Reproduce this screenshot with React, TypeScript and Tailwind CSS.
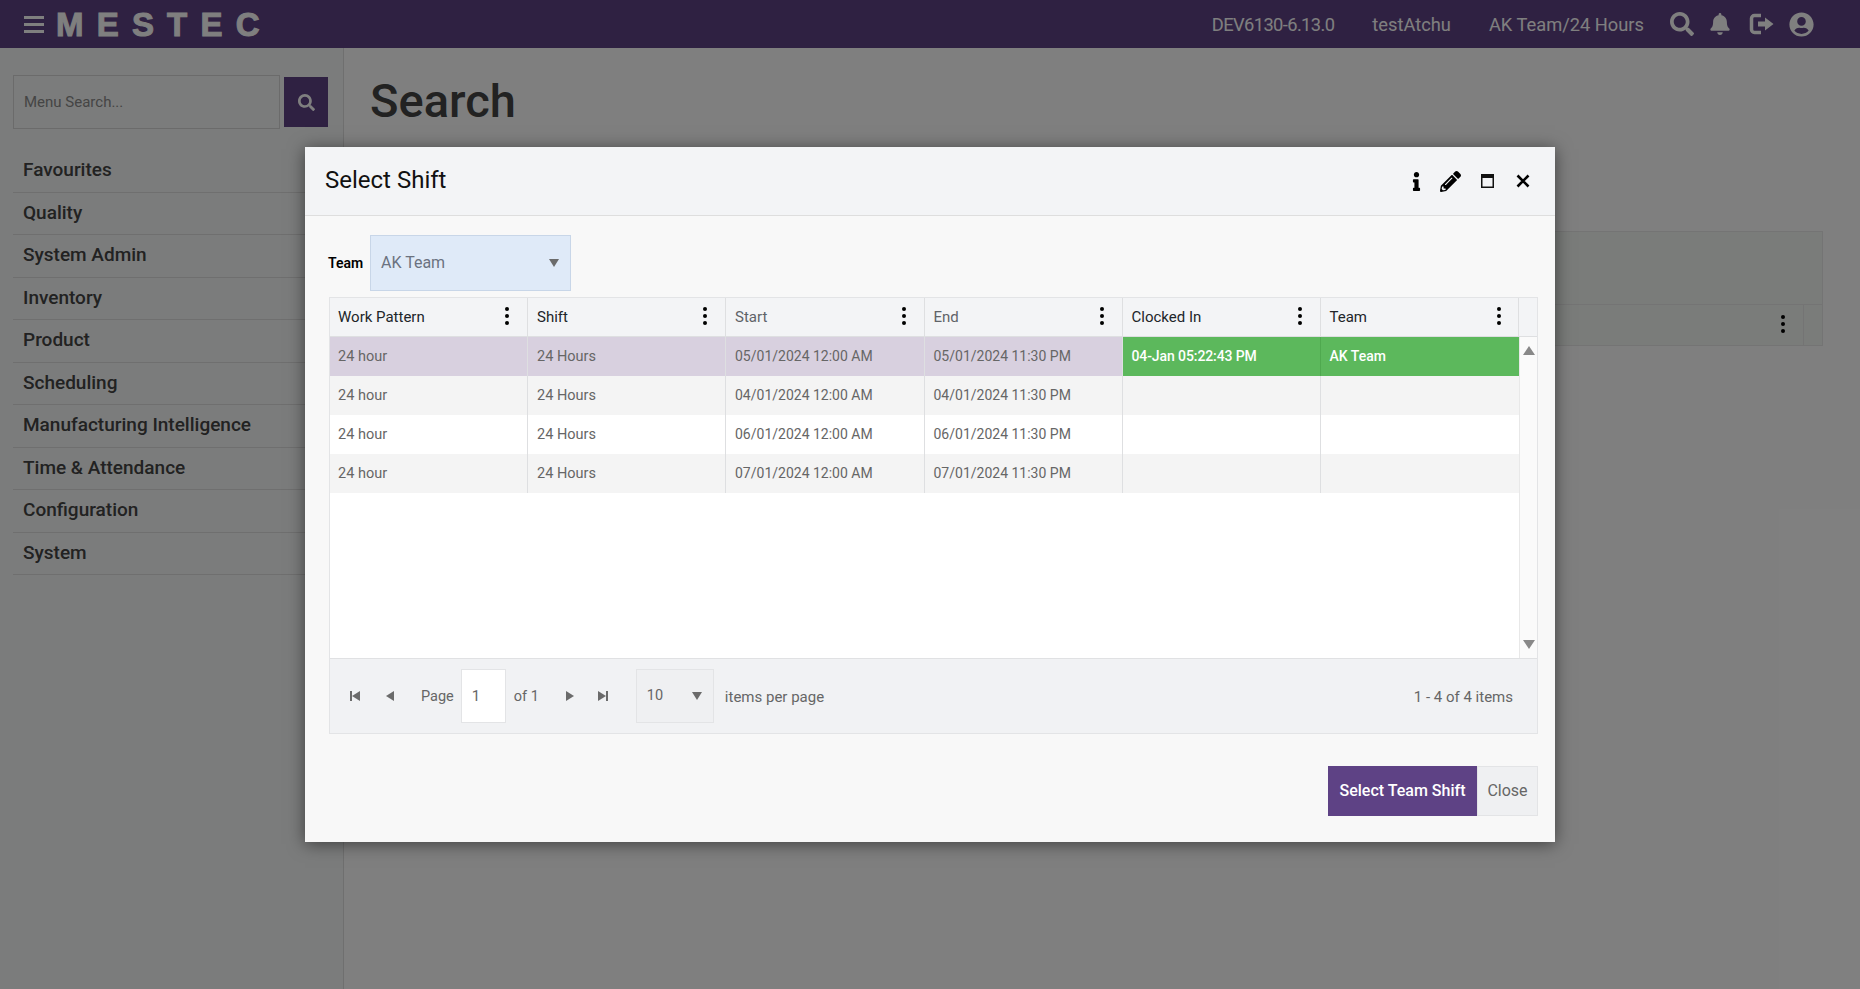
import React from "react";
import { FaSearch, FaBell, FaUserCircle, FaInfo, FaPencilAlt } from "react-icons/fa";

const font = "font-['Roboto','Noto_Sans',sans-serif]";
const menu = ["Favourites","Quality","System Admin","Inventory","Product","Scheduling","Manufacturing Intelligence","Time & Attendance","Configuration","System"];
const cols = [
  { label: "Work Pattern", w: "w-[198px] pl-[8px]", dark: true },
  { label: "Shift", w: "w-[198px] pl-[9px]", dark: true },
  { label: "Start", w: "w-[198.5px] pl-[9px]", dark: false },
  { label: "End", w: "w-[198px] pl-[9px]", dark: false },
  { label: "Clocked In", w: "w-[198px] pl-[9px]", dark: true },
  { label: "Team", w: "w-[198.5px] pl-[9px]", dark: true },
];
const rows = [
  { s: "05/01/2024 12:00 AM", e: "05/01/2024 11:30 PM", bg: "bg-[#d8d0df]", sel: true },
  { s: "04/01/2024 12:00 AM", e: "04/01/2024 11:30 PM", bg: "bg-[#f4f4f4]" },
  { s: "06/01/2024 12:00 AM", e: "06/01/2024 11:30 PM", bg: "bg-white" },
  { s: "07/01/2024 12:00 AM", e: "07/01/2024 11:30 PM", bg: "bg-[#f4f4f4]" },
];

function Dots({ cls = "bg-black" }: { cls?: string }) {
  return (
    <span className="flex flex-col gap-[3px]">
      <i className={`block w-1 h-1 rounded-full ${cls}`} />
      <i className={`block w-1 h-1 rounded-full ${cls}`} />
      <i className={`block w-1 h-1 rounded-full ${cls}`} />
    </span>
  );
}

function Tri({ dir, cls = "fill-[#6b6b6b]", a = 10, b = 8 }: { dir: "up" | "down" | "left" | "right"; cls?: string; a?: number; b?: number }) {
  const pts = { up: `0,${b} ${a / 2},0 ${a},${b}`, down: `0,0 ${a},0 ${a / 2},${b}`, left: `${b},0 ${b},${a} 0,${a / 2}`, right: `0,0 0,${a} ${b},${a / 2}` }[dir];
  const vert = dir === "up" || dir === "down";
  const w = vert ? a : b;
  const h = vert ? b : a;
  return (
    <svg width={w} height={h} viewBox={`0 0 ${w} ${h}`} className={`${cls} block`}>
      <polygon points={pts} />
    </svg>
  );
}

function Logout() {
  return (
    <svg width="26" height="24" viewBox="0 0 26 24" className="block">
      <path d="M12 3.500H5.500A3 3 0 0 0 2.500 6.500v11a3 3 0 0 0 3 3H12" fill="none" stroke="currentColor" strokeWidth="3.500" />
      <path d="M9 9.500h7V5.500l8.500 6.500-8.500 6.500v-4H9z" fill="currentColor" />
    </svg>
  );
}

export default function App() {
  return (
    <div className={`relative h-[989px] w-[1860px] overflow-hidden bg-white ${font}`}>
      <header className="h-12 bg-[#5e4285] flex items-center text-white">
        <div className="ml-6 w-5 flex flex-col gap-1">
          <i className="block h-[3px] bg-white" />
          <i className="block h-[3px] bg-white" />
          <i className="block h-[3px] bg-white" />
        </div>
        <span className="ml-3 text-[33px] leading-none font-bold tracking-[13.2px] font-['Liberation_Sans',sans-serif] [-webkit-text-stroke:1px_white]">MESTEC</span>
        <div className="ml-auto flex items-center text-[18.3px]">
          <span className="mr-[38px] pt-[1px] tracking-[-0.6px]">DEV6130-6.13.0</span>
          <span className="mr-[38px] pt-[1px]">testAtchu</span>
          <span className="mr-[26px] pt-[1px]">AK Team/24 Hours</span>
          <FaSearch className="text-[24px] mr-[15px]" />
          <FaBell className="text-[22px] mr-[18px]" />
          <span className="mr-[14px]"><Logout /></span>
          <FaUserCircle className="text-[25px] mr-[46px]" />
        </div>
      </header>
      <div className="flex h-[941px]">
        <aside className="w-[344px] shrink-0 border-r border-[#dedede] bg-[#f7f9f8] pl-[13px] pr-[15px] pt-[27px]">
          <div className="flex items-center h-[54px]">
            <div className="w-[267px] h-[54px] border border-[#d6d6d6] flex items-center pl-[10px] text-[15px] text-[#8a8a8a]">Menu Search...</div>
            <div className="ml-1 w-11 h-[50px] bg-[#5e4285] flex items-center justify-center text-white"><FaSearch className="text-[17px]" /></div>
          </div>
          <nav className="mt-[21px] w-[316px]">
            {menu.map((m) => (
              <div key={m} className="h-[42.5px] flex items-center border-b border-[#dedede] pl-[10px] pb-[1px] text-[19px] font-medium text-[#444]">{m}</div>
            ))}
          </nav>
        </aside>
        <main className="flex-1 pl-[26px] pr-[37px]">
          <h1 className="text-[47px] leading-[58px] mt-[24px] font-medium text-[#444]">Search</h1>
          <section className="mt-[101px] h-[115px] border border-[#e8e8e8] bg-[#f4f8f4]">
            <div className="h-[73px] border-b border-[#e8e8e8]" />
            <div className="h-[40px] flex items-center justify-end">
              <span className="mr-[18px] -mt-[2px]"><Dots cls="bg-black" /></span>
              <span className="w-[19px] h-full border-l border-[#e8e8e8]" />
            </div>
          </section>
        </main>
      </div>

      <div className="absolute inset-0 bg-black/50" />

      <div className="absolute left-[305px] top-[147px] w-[1250px] h-[695px] bg-[#f8f8f8] shadow-[0_2px_16px_rgba(0,0,0,0.5)] flex flex-col">
        <div className="h-[69px] shrink-0 bg-[#f3f4f6] border-b border-[#dedede] flex items-center pl-5 pr-[25px]">
          <span className="text-[24px] text-[#111] -mt-[3px]">Select Shift</span>
          <div className="ml-auto flex items-center text-black">
            <FaInfo className="text-[19px]" />
            <FaPencilAlt className="text-[21px] ml-[14px]" />
            <svg width="13" height="14" viewBox="0 0 13 14" className="ml-[20px] block">
              <rect x="0.750" y="0.750" width="11.500" height="12.500" fill="none" stroke="#111" strokeWidth="1.500" />
              <rect x="0" y="0" width="13" height="4" fill="#111" />
            </svg>
            <svg width="14" height="14" viewBox="0 0 14 14" className="ml-[22px] block">
              <path d="M1.500 1.500l11 11M12.500 1.500l-11 11" stroke="#000" strokeWidth="2.600" />
            </svg>
          </div>
        </div>

        <div className="pl-[24px] pr-[17px] flex-1 flex flex-col">
          <div className="flex items-center h-[56px] mt-[19px]">
            <label className="text-[14px] font-semibold text-black w-[41px] -ml-[1px] mr-[1px]">Team</label>
            <div className="w-[201px] h-[56px] bg-[#dfeaf8] border border-[#c8d6e8] flex items-center pl-[10px] pr-[11px] text-[16px] text-[#6b7280]">
              AK Team
              <span className="ml-auto"><Tri dir="down" /></span>
            </div>
          </div>

          <div className="mt-[6px] border border-[#e3e4e6] bg-white">
            <div className="flex h-[39px] bg-[#f3f4f6] border-b border-[#dedfe1]">
              {cols.map((c) => (
                <div key={c.label} className={`${c.w} shrink-0 border-r border-[#dedfe1] flex items-center text-[15px] ${c.dark ? "text-[#212529]" : "text-[#5f6368]"}`}>
                  {c.label}
                  <span className={`ml-auto -mt-[2px] ${c.label === "Team" ? "mr-[17px]" : "mr-[18px]"}`}><Dots /></span>
                </div>
              ))}
              <div className="flex-1" />
            </div>
            <div className="flex h-[321px]">
              <div className="w-[1189px] shrink-0">
                {rows.map((r) => (
                  <div key={r.s} className={`flex h-[39px] ${r.bg} text-[14px] text-[#666]`}>
                    <div className="w-[198px] shrink-0 pl-[8px] flex items-center border-r border-[#dedfe1] text-[14.5px]">24 hour</div>
                    <div className="w-[198px] shrink-0 pl-[9px] flex items-center border-r border-[#dedfe1] text-[14.5px]">24 Hours</div>
                    <div className="w-[198.5px] shrink-0 pl-[9px] flex items-center border-r border-[#dedfe1]">{r.s}</div>
                    <div className="w-[198px] shrink-0 pl-[9px] flex items-center border-r border-[#dedfe1]">{r.e}</div>
                    <div className={`w-[198px] shrink-0 pl-[9px] flex items-center border-r ${r.sel ? "bg-[#5cb85c] text-white font-medium tracking-[-0.1px] border-[#4fa94f]" : "border-[#dedfe1]"}`}>{r.sel ? "04-Jan 05:22:43 PM" : ""}</div>
                    <div className={`w-[198.5px] shrink-0 pl-[9px] flex items-center ${r.sel ? "bg-[#5cb85c] text-white font-medium" : ""}`}>{r.sel ? "AK Team" : ""}</div>
                  </div>
                ))}
              </div>
              <div className="flex-1 border-l border-[#e8e8e8] flex flex-col items-center justify-between pt-[9px] pb-[9px] bg-[#fafafa]">
                <Tri dir="up" cls="fill-[#888]" a={12} b={9} />
                <Tri dir="down" cls="fill-[#888]" a={12} b={9} />
              </div>
            </div>
            <div className="h-[75px] bg-[#f1f2f4] border-t border-[#e0e1e3] flex items-center text-[15px] text-[#666] pr-[24px]">
              <span className="ml-[20px] flex items-center"><i className="block w-[2px] h-[10px] bg-[#6b6b6b]" /><Tri dir="left" /></span>
              <span className="ml-[26px]"><Tri dir="left" /></span>
              <span className="ml-[27px] pt-[2px] text-[14.5px]">Page</span>
              <span className="ml-[7px] w-[45px] h-[54px] bg-white border border-[#e3e4e6] flex items-center pl-[10px]">1</span>
              <span className="ml-[8px] pt-[2px] text-[14.5px]">of 1</span>
              <span className="ml-[27px]"><Tri dir="right" /></span>
              <span className="ml-[24px] flex items-center"><Tri dir="right" /><i className="block w-[2px] h-[10px] bg-[#6b6b6b]" /></span>
              <span className="ml-[28px] w-[78px] h-[54px] bg-[#eff0f2] border border-[#e3e4e6] flex items-center pl-[10px] pr-[11px] text-[14.5px]">10<span className="ml-auto"><Tri dir="down" /></span></span>
              <span className="ml-[11px] pt-[2px]">items per page</span>
              <span className="ml-auto pt-[2px]">1 - 4 of 4 items</span>
            </div>
          </div>

          <div className="mt-[32px] flex justify-end">
            <button className="w-[149px] h-[50px] bg-[#5e4285] text-white text-[16px] font-medium">Select Team Shift</button>
            <button className="w-[61px] h-[50px] bg-[#eff0f2] border border-[#e3e4e6] text-[16px] text-[#666]">Close</button>
          </div>
        </div>
      </div>
    </div>
  );
}
